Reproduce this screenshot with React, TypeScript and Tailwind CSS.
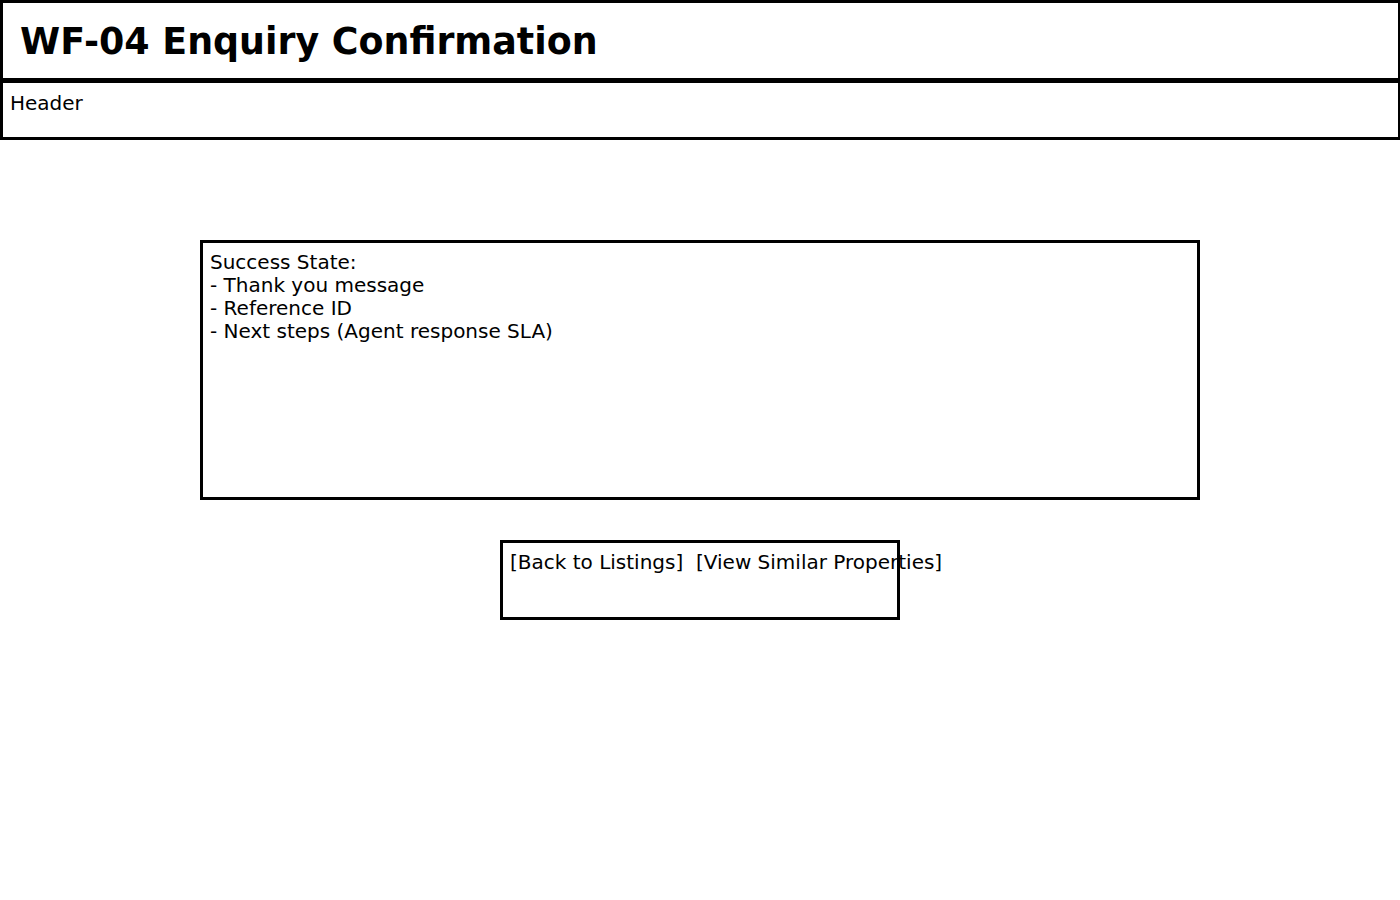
export default function App() {
  return (
    <div className="min-h-[900px] w-[1400px] bg-white text-black [font-family:'DejaVu_Sans',sans-serif]">
      <div className="flex h-[80px] items-center border-[3px] border-b-2 border-r-2 border-black pl-[17px] pt-[3px]">
        <h1 className="text-[36.4px] font-bold leading-none">WF-04 Enquiry Confirmation</h1>
      </div>
      <div className="h-[60px] border-[3px] border-r-2 border-black px-[7px] pt-[9px] text-[20px] leading-[23px]">
        Header
      </div>

      <div className="mt-[100px] flex flex-col items-center gap-[40px]">
        <div className="h-[260px] w-[1000px] border-[3px] border-black px-[7px] pt-[8px] text-[20px] leading-[23px]">
          <p>Success State:</p>
          <p>- Thank you message</p>
          <p>- Reference ID</p>
          <p>- Next steps (Agent response SLA)</p>
        </div>

        <div className="h-[80px] w-[400px] border-[3px] border-black px-[7px] pt-[8px] text-[20px] leading-[23px]">
          <p className="whitespace-pre">{"[Back to Listings]  [View Similar Properties]"}</p>
        </div>
      </div>
    </div>
  );
}
